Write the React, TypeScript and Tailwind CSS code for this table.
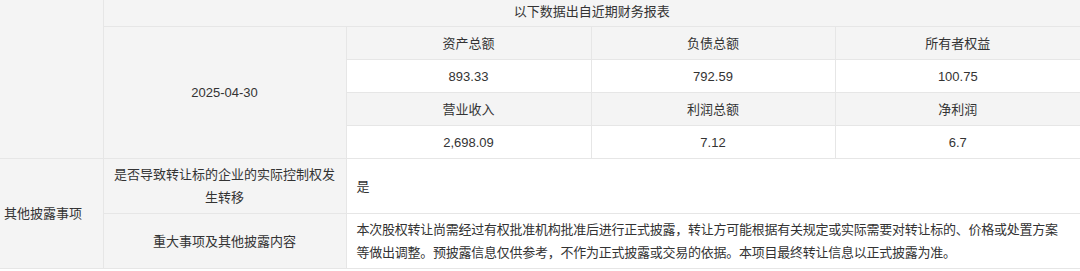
import React from 'react';

const gray = 'bg-[#f4f4f4]';
const cell = 'border border-[#e6e6e6] p-0 align-middle font-normal';

export default function App() {
  const rows = [
    { labels: ['资产总额', '负债总额', '所有者权益'], values: ['893.33', '792.59', '100.75'] },
    { labels: ['营业收入', '利润总额', '净利润'], values: ['2,698.09', '7.12', '6.7'] },
  ];

  return (
    <div
      className="w-[1080px] h-[271px] bg-white text-[#333] text-[13px] leading-[23px]"
      style={{ fontFamily: '"Liberation Sans", "Noto Sans CJK SC", sans-serif' }}
    >
      <table className="w-[1080px] table-fixed border-collapse">
        <colgroup>
          <col className="w-[103px]" />
          <col className="w-[243px]" />
          <col className="w-[245px]" />
          <col className="w-[244px]" />
          <col className="w-[245px]" />
        </colgroup>
        <tbody>
          <tr className="h-[26px]">
            <td rowSpan={5} className={`${cell} ${gray} border-l-0 border-t-0`} />
            <td colSpan={4} className={`${cell} ${gray} border-t-0 border-r-0 text-center pb-[3px]`}>
              以下数据出自近期财务报表
            </td>
          </tr>
          {rows.map((r, i) => (
            <React.Fragment key={i}>
              <tr className="h-[33px]">
                {i === 0 && (
                  <td rowSpan={4} className={`${cell} ${gray} text-center`}>
                    2025-04-30
                  </td>
                )}
                {r.labels.map((l, j) => (
                  <td key={l} className={`${cell} ${gray} text-center ${j === 2 ? 'border-r-0' : ''}`}>
                    {l}
                  </td>
                ))}
              </tr>
              <tr className="h-[33px]">
                {r.values.map((v, j) => (
                  <td key={v} className={`${cell} bg-white text-center ${j === 2 ? 'border-r-0' : ''}`}>
                    {v}
                  </td>
                ))}
              </tr>
            </React.Fragment>
          ))}
          <tr className="h-[55px]">
            <td rowSpan={2} className={`${cell} ${gray} border-l-0 px-[4px] text-left`}>
              其他披露事项
            </td>
            <td className={`${cell} ${gray} px-[6px] text-center`}>
              是否导致转让标的企业的实际控制权发生转移
            </td>
            <td colSpan={3} className={`${cell} bg-white border-r-0 pl-[10px] pr-[4px] text-left`}>
              是
            </td>
          </tr>
          <tr className="h-[55px]">
            <td className={`${cell} ${gray} px-[6px] text-center`}>重大事项及其他披露内容</td>
            <td colSpan={3} className={`${cell} bg-white border-r-0 pl-[10px] pr-[4px] text-left tracking-[-0.25px]`}>
              本次股权转让尚需经过有权批准机构批准后进行正式披露，转让方可能根据有关规定或实际需要对转让标的、价格或处置方案
              <br />
              等做出调整。预披露信息仅供参考，不作为正式披露或交易的依据。本项目最终转让信息以正式披露为准。
            </td>
          </tr>
        </tbody>
      </table>
    </div>
  );
}
